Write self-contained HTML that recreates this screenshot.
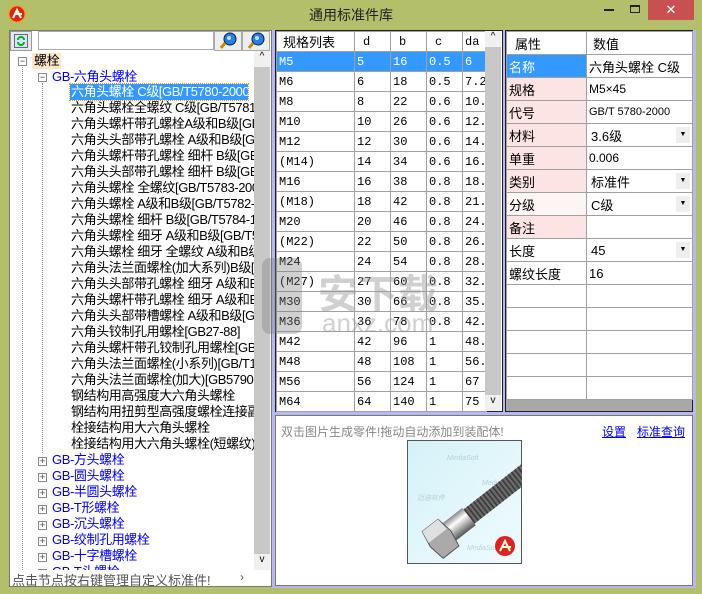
<!DOCTYPE html>
<html><head><meta charset="utf-8"><style>
*{box-sizing:border-box;margin:0;padding:0}
body{width:702px;height:594px;background:#b4bf6c;position:relative;overflow:hidden;font-family:"Liberation Sans","Noto Sans CJK SC",sans-serif;font-size:12px;color:#000}
.abs{position:absolute}
.title{left:0;top:5px;width:702px;text-align:center;font-size:14px;color:#222}
.close{left:648px;top:0;width:46px;height:20px;background:#c75050;color:#fff;text-align:center;font-size:13px;line-height:20px}
.tree{left:10px;top:51px;width:244px;height:519px;background:#fff;overflow:hidden}
.row{position:absolute;height:16px;line-height:16px;font-size:13px;white-space:nowrap;letter-spacing:-0.4px}
.blue{color:#0000ee}
.box{position:absolute;width:9px;height:9px;border:1px solid #888;background:#fff;font-size:9px;line-height:7px;text-align:center;color:#333}
.vline{position:absolute;border-left:1px dotted #888}
table{border-collapse:collapse;table-layout:fixed}
td{border:1px solid #a0a0a0;overflow:hidden;white-space:nowrap;padding-left:2px}
.mt td{height:20px;font-size:12px;font-family:"Liberation Mono","Noto Sans CJK SC",monospace}
.pt td{height:23px;font-size:13px}
.dd{position:absolute;right:2px;top:3px;width:14px;height:16px;background:#eee;font-size:7px;text-align:center;line-height:16px}
</style></head><body>
<svg class="abs" style="left:8px;top:5px" width="20" height="20"><circle cx="9" cy="9" r="8" fill="#d22"/><circle cx="9" cy="9" r="8" fill="none" stroke="#f90" stroke-width="1"/><path d="M5 13 L9 5 L13 13 M7 9 H14" stroke="#ffd" stroke-width="2" fill="none"/></svg>
<div class="abs title">通用标准件库</div>
<div class="abs" style="left:604px;top:9px;width:10px;height:2px;background:#222"></div>
<div class="abs" style="left:630px;top:5px;width:10px;height:8px;border:1px solid #222;border-top-width:2px"></div>
<div class="abs close">✕</div>

<div class="abs" style="left:9px;top:30px;width:263px;height:557px;background:#fff;border:1px solid #777"></div>
<div class="abs" style="left:10px;top:31px;width:22px;height:20px;background:#e8e8e8;border:1px solid #999"></div>
<svg class="abs" style="left:14px;top:34px" width="14" height="14"><rect x="0.5" y="0.5" width="13" height="13" fill="#cfe8ff" stroke="#668"/><path d="M4 6a3 3 0 0 1 6 0M10 8a3 3 0 0 1-6 0" stroke="#1a1" stroke-width="2" fill="none"/></svg>
<div class="abs" style="left:38px;top:31px;width:176px;height:19px;background:#fff;border:1px solid #aaa"></div>
<div class="abs" style="left:214px;top:31px;width:28px;height:20px;background:#eee;border:1px solid #aaa"></div>
<div class="abs" style="left:242px;top:31px;width:28px;height:20px;background:#eee;border:1px solid #aaa"></div>
<svg class="abs" style="left:220px;top:32px" width="18" height="18"><circle cx="10" cy="7" r="6" fill="#2a7fe0" stroke="#024" /><circle cx="9" cy="6" r="2" fill="#bdf"/><path d="M5 11 L1 16" stroke="#c80" stroke-width="3"/></svg>
<svg class="abs" style="left:248px;top:32px" width="18" height="18"><circle cx="10" cy="7" r="6" fill="#2a7fe0" stroke="#024" /><circle cx="9" cy="6" r="2" fill="#bdf"/><path d="M5 11 L1 16" stroke="#c80" stroke-width="3"/></svg>
<div class="abs tree">
 <div class="vline" style="left:12px;top:12px;height:515px"></div>
 <div class="vline" style="left:32px;top:32px;height:370px"></div>
 <div class="box" style="left:8px;top:6px">−</div>
 <div class="row" style="left:22px;top:2px;background:#fde5c8;padding:0 2px">螺栓</div>
 <div class="box" style="left:28px;top:22px">−</div>
 <div class="row blue" style="left:42px;top:18px">GB-六角头螺栓</div>
 <div class="row" style="left:60px;top:33px;width:178px;background:#3399ff;color:#fff;outline:1px dotted #f90;padding-left:1px;overflow:hidden">六角头螺栓 C级[GB/T5780-2000]</div>
 <div class="row" style="left:61px;top:49px">六角头螺栓全螺纹 C级[GB/T5781-2000]</div>
 <div class="row" style="left:61px;top:65px">六角头螺杆带孔螺栓A级和B级[GB/T</div>
 <div class="row" style="left:61px;top:81px">六角头头部带孔螺栓 A级和B级[GB</div>
 <div class="row" style="left:61px;top:97px">六角头螺杆带孔螺栓 细杆 B级[GB</div>
 <div class="row" style="left:61px;top:113px">六角头头部带孔螺栓 细杆 B级[GB</div>
 <div class="row" style="left:61px;top:129px">六角头螺栓 全螺纹[GB/T5783-2000</div>
 <div class="row" style="left:61px;top:145px">六角头螺栓 A级和B级[GB/T5782-20</div>
 <div class="row" style="left:61px;top:161px">六角头螺栓 细杆 B级[GB/T5784-19</div>
 <div class="row" style="left:61px;top:177px">六角头螺栓 细牙 A级和B级[GB/T5</div>
 <div class="row" style="left:61px;top:193px">六角头螺栓 细牙 全螺纹 A级和B级</div>
 <div class="row" style="left:61px;top:209px">六角头法兰面螺栓(加大系列)B级[</div>
 <div class="row" style="left:61px;top:225px">六角头头部带孔螺栓 细牙 A级和B</div>
 <div class="row" style="left:61px;top:241px">六角头螺杆带孔螺栓 细牙 A级和B</div>
 <div class="row" style="left:61px;top:257px">六角头头部带槽螺栓 A级和B级[GB</div>
 <div class="row" style="left:61px;top:273px">六角头铰制孔用螺栓[GB27-88]</div>
 <div class="row" style="left:61px;top:289px">六角头螺杆带孔铰制孔用螺栓[GB2</div>
 <div class="row" style="left:61px;top:305px">六角头法兰面螺栓(小系列)[GB/T16</div>
 <div class="row" style="left:61px;top:321px">六角头法兰面螺栓(加大)[GB5790-</div>
 <div class="row" style="left:61px;top:337px">钢结构用高强度大六角头螺栓</div>
 <div class="row" style="left:61px;top:353px">钢结构用扭剪型高强度螺栓连接副</div>
 <div class="row" style="left:61px;top:369px">栓接结构用大六角头螺栓</div>
 <div class="row" style="left:61px;top:385px">栓接结构用大六角头螺栓(短螺纹)</div>
 <div class="box" style="left:28px;top:406px">+</div><div class="row blue" style="left:42px;top:401px">GB-方头螺栓</div>
 <div class="box" style="left:28px;top:422px">+</div><div class="row blue" style="left:42px;top:417px">GB-圆头螺栓</div>
 <div class="box" style="left:28px;top:438px">+</div><div class="row blue" style="left:42px;top:433px">GB-半圆头螺栓</div>
 <div class="box" style="left:28px;top:454px">+</div><div class="row blue" style="left:42px;top:449px">GB-T形螺栓</div>
 <div class="box" style="left:28px;top:470px">+</div><div class="row blue" style="left:42px;top:465px">GB-沉头螺栓</div>
 <div class="box" style="left:28px;top:486px">+</div><div class="row blue" style="left:42px;top:481px">GB-绞制孔用螺栓</div>
 <div class="box" style="left:28px;top:502px">+</div><div class="row blue" style="left:42px;top:497px">GB-十字槽螺栓</div>
 <div class="box" style="left:28px;top:518px">+</div><div class="row blue" style="left:42px;top:513px">GB-T头螺栓</div>
</div>
<div class="abs" style="left:254px;top:51px;width:16px;height:519px;background:#c8c8c8"></div>
<div class="abs" style="left:254px;top:51px;width:16px;height:16px;background:#f0f0f0;text-align:center;font-size:10px">^</div>
<div class="abs" style="left:254px;top:554px;width:16px;height:16px;background:#f0f0f0;text-align:center;font-size:10px">v</div>
<div class="abs" style="left:10px;top:570px;width:260px;height:16px;background:#fff"></div>
<div class="abs" style="left:12px;top:570px;font-size:13px;color:#555">点击节点按右键管理自定义标准件!</div>
<div class="abs" style="left:240px;top:570px;font-size:12px;color:#555">›</div>

<div class="abs" style="left:272px;top:30px;width:4px;height:558px;background:#b8b8f0"></div>

<div class="abs" style="left:275px;top:30px;width:228px;height:382px;background:#fff;border:1px solid #222"></div>
<table class="abs mt" style="left:276px;top:31px;width:210px">
<colgroup><col style="width:78px"><col style="width:36px"><col style="width:36px"><col style="width:36px"><col style="width:24px"></colgroup>
<tr><td style="font-family:'Liberation Sans','Noto Sans CJK SC',sans-serif;font-size:13px;padding-left:6px">规格列表</td><td style="padding-left:8px">d</td><td style="padding-left:8px">b</td><td style="padding-left:8px">c</td><td>da</td></tr>
<tr style="background:#3399ff;color:#fff"><td>M5</td><td>5</td><td>16</td><td>0.5</td><td>6</td></tr>
<tr><td>M6</td><td>6</td><td>18</td><td>0.5</td><td>7.2</td></tr>
<tr><td>M8</td><td>8</td><td>22</td><td>0.6</td><td>10.2</td></tr>
<tr><td>M10</td><td>10</td><td>26</td><td>0.6</td><td>12.2</td></tr>
<tr><td>M12</td><td>12</td><td>30</td><td>0.6</td><td>14.7</td></tr>
<tr><td>(M14)</td><td>14</td><td>34</td><td>0.6</td><td>16.7</td></tr>
<tr><td>M16</td><td>16</td><td>38</td><td>0.8</td><td>18.7</td></tr>
<tr><td>(M18)</td><td>18</td><td>42</td><td>0.8</td><td>21.2</td></tr>
<tr><td>M20</td><td>20</td><td>46</td><td>0.8</td><td>24.4</td></tr>
<tr><td>(M22)</td><td>22</td><td>50</td><td>0.8</td><td>26.4</td></tr>
<tr><td>M24</td><td>24</td><td>54</td><td>0.8</td><td>28.4</td></tr>
<tr><td>(M27)</td><td>27</td><td>60</td><td>0.8</td><td>32.4</td></tr>
<tr><td>M30</td><td>30</td><td>66</td><td>0.8</td><td>35.4</td></tr>
<tr><td>M36</td><td>36</td><td>78</td><td>0.8</td><td>42.4</td></tr>
<tr><td>M42</td><td>42</td><td>96</td><td>1</td><td>48.6</td></tr>
<tr><td>M48</td><td>48</td><td>108</td><td>1</td><td>56.6</td></tr>
<tr><td>M56</td><td>56</td><td>124</td><td>1</td><td>67</td></tr>
<tr><td>M64</td><td>64</td><td>140</td><td>1</td><td>75</td></tr>
</table>
<div class="abs" style="left:485px;top:31px;width:16px;height:380px;background:#c8c8c8"></div>
<div class="abs" style="left:485px;top:31px;width:16px;height:16px;background:#f0f0f0;text-align:center;font-size:10px">^</div>
<div class="abs" style="left:485px;top:395px;width:16px;height:16px;background:#f0f0f0;text-align:center;font-size:10px">v</div>

<div class="abs" style="left:262px;top:258px;width:40px;height:76px;background:rgba(120,120,120,.35);border-radius:8px"></div>
<div class="abs" style="left:318px;top:262px;font-size:40px;font-weight:bold;color:rgba(150,150,150,.45)">安下载</div>
<div class="abs" style="left:322px;top:308px;font-size:26px;color:rgba(150,150,150,.45)">anxz.com</div>

<div class="abs" style="left:503px;top:30px;width:3px;height:382px;background:#b8b8f0"></div>
<div class="abs" style="left:505px;top:30px;width:188px;height:382px;background:#a8a8a8;border:1px solid #222"></div>
<table class="abs pt" style="left:506px;top:31px;width:186px;background:#fff">
<colgroup><col style="width:80px"><col style="width:106px"></colgroup>
<tr><td style="height:20px;padding-left:8px">属性</td><td style="padding-left:6px">数值</td></tr>
<tr><td style="background:#3399ff;color:#fff">名称</td><td>六角头螺栓 C级</td></tr>
<tr><td style="background:#fde4e4">规格</td><td style="font-size:12px">M5×45</td></tr>
<tr><td style="background:#fde4e4">代号</td><td style="font-size:11px">GB/T 5780-2000</td></tr>
<tr><td style="background:#fde4e4">材料</td><td style="position:relative;padding-left:4px">3.6级<span class="dd">▼</span></td></tr>
<tr><td style="background:#fde4e4">单重</td><td style="font-size:12px">0.006</td></tr>
<tr><td style="background:#fde4e4">类别</td><td style="position:relative;padding-left:4px">标准件<span class="dd">▼</span></td></tr>
<tr><td style="background:#fdf4f4">分级</td><td style="position:relative;padding-left:4px">C级<span class="dd">▼</span></td></tr>
<tr><td style="background:#fde4e4">备注</td><td></td></tr>
<tr><td>长度</td><td style="position:relative;padding-left:4px">45<span class="dd">▼</span></td></tr>
<tr><td>螺纹长度</td><td>16</td></tr>
<tr><td></td><td></td></tr><tr><td></td><td></td></tr><tr><td></td><td></td></tr><tr><td></td><td></td></tr><tr><td></td><td></td></tr>
</table>
<div class="abs" style="left:693px;top:30px;width:3px;height:382px;background:#b8b8f0"></div>

<div class="abs" style="left:272px;top:412px;width:424px;height:176px;background:#b8b8f0"></div>
<div class="abs" style="left:275px;top:415px;width:418px;height:171px;background:#fff;border:1px solid #777"></div>
<div class="abs" style="left:281px;top:423px;font-size:12px;color:#888">双击图片生成零件!拖动自动添加到装配体!</div>
<div class="abs" style="left:602px;top:423px;font-size:12px;color:#0000ee;text-decoration:underline">设置</div>
<div class="abs" style="left:637px;top:423px;font-size:12px;color:#0000ee;text-decoration:underline">标准查询</div>
<svg class="abs" style="left:407px;top:440px" width="115" height="124">
<defs><linearGradient id="sh" x1="0" y1="0" x2="0" y2="1"><stop offset="0" stop-color="#888"/><stop offset=".35" stop-color="#fff"/><stop offset="1" stop-color="#555"/></linearGradient>
<linearGradient id="bg" x1="0" y1="0" x2="1" y2="1"><stop offset="0" stop-color="#d4f2f8"/><stop offset="1" stop-color="#f0fbff"/></linearGradient></defs>
<rect x=".5" y=".5" width="114" height="123" fill="url(#bg)" stroke="#555"/>
<g fill="#b8d0d8" font-size="7" font-style="italic"><text x="40" y="20">MediaSoft</text><text x="75" y="45">MediaSoft</text><text x="10" y="60">迈迪软件</text><text x="60" y="110">MediaSoft</text></g>
<g transform="translate(32 100) rotate(-38)">
<rect x="36" y="-9" width="78" height="18" fill="#6a6a6a"/>
<path d="M39 -9v18M43 -9v18M47 -9v18M51 -9v18M55 -9v18M59 -9v18M63 -9v18M67 -9v18M71 -9v18M75 -9v18M79 -9v18M83 -9v18M87 -9v18M91 -9v18M95 -9v18M99 -9v18M103 -9v18M107 -9v18M111 -9v18" stroke="#3a3a3a" stroke-width="1.6"/>
<rect x="12" y="-11" width="26" height="22" fill="url(#sh)"/>
<path d="M-8 -17 L12 -17 L15 0 L12 17 L-8 17 L-11 0Z" fill="#aaa" stroke="#555"/>
<path d="M-8 -17 L12 -17 L13 -4 L-10 -4Z" fill="#e0e0e0"/>
</g>
<circle cx="98" cy="106" r="10" fill="#d22"/><path d="M93 111 L98 101 L103 111M95 107H104" stroke="#ffd" stroke-width="2" fill="none"/>
</svg>
</body></html>
